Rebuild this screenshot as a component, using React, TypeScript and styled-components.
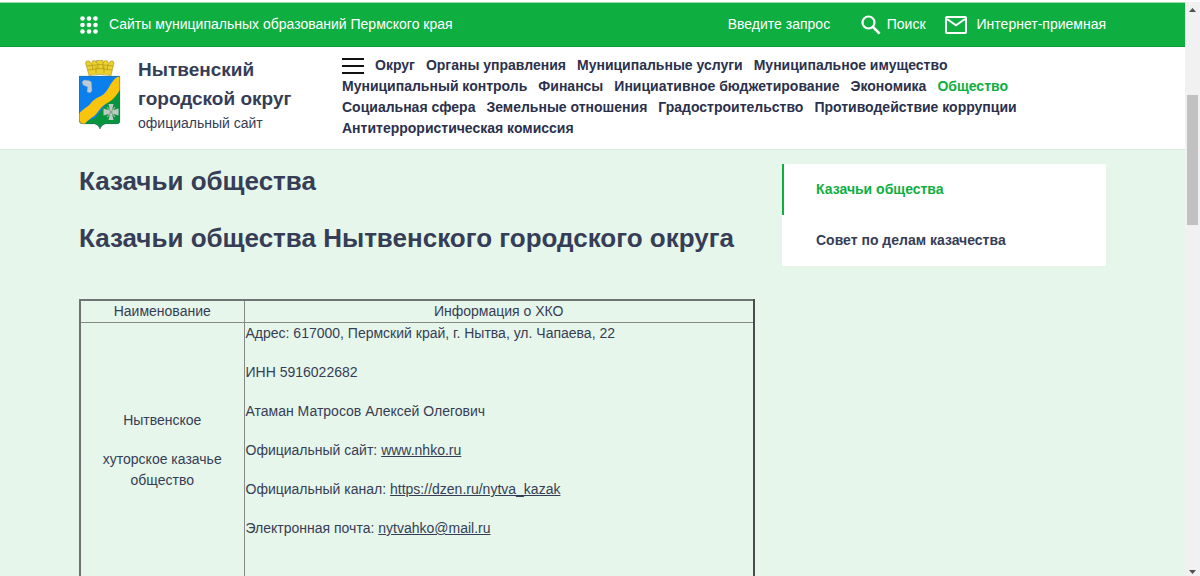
import React from "react";
import styled, { createGlobalStyle } from "styled-components";

const ink = "#363d56";
const green = "#0fae41";
const mint = "#e6f6ea";

const GlobalStyle = createGlobalStyle`
  *, *::before, *::after { box-sizing: border-box; }
  body {
    margin: 0;
    background: ${mint};
    color: ${ink};
    font-family: "Liberation Sans", Arial, sans-serif;
    font-size: 14px;
    line-height: 21px;
  }
  a { color: inherit; }
`;

const Viewport = styled.div`
  display: flex;
  height: 100vh;
  overflow: hidden;
  border-top: 2px solid #fff;
`;

const Page = styled.div`
  flex: 1;
  min-width: 0;
  overflow: hidden;
`;

const TopBar = styled.div`
  display: flex;
  align-items: center;
  justify-content: space-between;
  height: 45px;
  padding: 0 79px;
  background: ${green};
  border-top: 1px solid #9ad9ae;
  border-bottom: 1px solid #0a9c38;
  color: #fff;
`;

const TopLink = styled.a`
  display: flex;
  align-items: center;
  gap: 10px;
  color: #fff;
  text-decoration: none;
  white-space: nowrap;
`;

const TopTools = styled.div`
  display: flex;
  align-items: center;
  gap: 19px;
`;

const SearchForm = styled.form`
  display: flex;
  align-items: center;
`;

const SearchInput = styled.input`
  width: 133px;
  padding: 0;
  border: 0;
  outline: 0;
  background: transparent;
  color: #fff;
  font: inherit;
  &::placeholder { color: #fff; opacity: 1; }
`;

const SearchButton = styled.button`
  display: flex;
  align-items: center;
  gap: 6px;
  padding: 0;
  border: 0;
  background: transparent;
  color: #fff;
  font: inherit;
  cursor: pointer;
`;

const Header = styled.header`
  display: flex;
  align-items: flex-start;
  padding: 8px 79px 10px;
  background: #fff;
  border-bottom: 1px solid #d5ebdc;
`;

const Brand = styled.a`
  display: flex;
  flex: 0 0 263px;
  gap: 17px;
  color: ${ink};
  text-decoration: none;
`;

const EmblemSvg = styled.svg`
  display: block;
  flex: none;
  margin-top: 5px;
`;

const BrandName = styled.strong`
  display: block;
  font-size: 19px;
  line-height: 29px;
`;

const BrandNote = styled.span`
  display: block;
`;

const Nav = styled.nav`
  display: flex;
  flex: 1;
  flex-wrap: wrap;
  align-items: center;
  column-gap: 11px;
`;

const MenuButton = styled.button`
  display: flex;
  padding: 0;
  border: 0;
  background: transparent;
  cursor: pointer;
`;

const NavLink = styled.a<{ $active?: boolean }>`
  color: ${(p) => (p.$active ? green : "#2b314b")};
  font-weight: bold;
  text-decoration: none;
  white-space: nowrap;
`;

const Content = styled.div`
  display: grid;
  grid-template-columns: 676fr 324fr;
  column-gap: 27px;
  align-items: start;
  padding: 14px 79px;
`;

const Heading = styled.h1`
  margin: 0 0 22px;
  font-size: 26px;
  line-height: 35px;
`;

const Table = styled.table`
  width: 100%;
  margin-top: 43px;
  border-collapse: collapse;
  border: 2px solid #6f7371;
  border-right-color: #4a4d4c;
`;

const Cell = styled.td<{ $center?: boolean }>`
  padding: 0;
  border: 1px solid #858987;
  text-align: ${(p) => (p.$center ? "center" : "left")};
`;

const HeadCell = styled.th<{ $narrow?: boolean }>`
  width: ${(p) => (p.$narrow ? "164px" : "auto")};
  padding: 0;
  border: 1px solid #858987;
  font-weight: normal;
`;

const Paragraph = styled.p`
  margin: 0 0 18px;
  padding: 0 1px;
  &:last-child { margin-bottom: 0; }
`;

const SideMenu = styled.nav`
  background: #fff;
`;

const SideLink = styled.a<{ $active?: boolean }>`
  display: block;
  padding: 15px 32px;
  border-left: 2px solid ${(p) => (p.$active ? green : "#fff")};
  color: ${(p) => (p.$active ? green : ink)};
  font-weight: bold;
  text-decoration: none;
`;

const ScrollTrack = styled.div`
  display: flex;
  flex: 0 0 15px;
  flex-direction: column;
  align-items: center;
  justify-content: space-between;
  padding: 6px 0 2px;
  background: #f1f1f1;
`;

const ScrollSpace = styled.div`
  flex: 1;
  width: 11px;
  padding-top: 83px;
`;

const ScrollThumb = styled.div`
  height: 130px;
  background: #c1c1c1;
`;

const DotsIcon = () => (
  <svg width="20" height="20" viewBox="0 0 20 20" fill="#fff" aria-hidden="true">
    {[3.5, 10, 16.5].map((y) =>
      [3.5, 10, 16.5].map((x) => <circle key={`${x}-${y}`} cx={x} cy={y} r="2.3" />)
    )}
  </svg>
);

const SearchIcon = () => (
  <svg width="20" height="20" viewBox="0 0 20 20" fill="none" stroke="#fff" aria-hidden="true">
    <circle cx="7.5" cy="7.5" r="6" strokeWidth="2.2" />
    <path d="M12 12L18.6 18.6" strokeWidth="2.6" />
  </svg>
);

const MailIcon = () => (
  <svg width="22" height="18" viewBox="0 0 22 18" fill="none" stroke="#fff" strokeWidth="2" aria-hidden="true">
    <rect x="1" y="1" width="20" height="16" rx="1" />
    <path d="M2 3L11 9.3L20 3" />
  </svg>
);

const MenuIcon = () => (
  <svg width="22" height="16" viewBox="0 0 22 16" fill="#111" aria-hidden="true">
    <rect width="22" height="2" />
    <rect y="7" width="22" height="2" />
    <rect y="14" width="22" height="2" />
  </svg>
);

const Emblem = () => (
  <EmblemSvg width="42" height="70" viewBox="0 0 42 70" aria-hidden="true">
    <defs>
      <clipPath id="shield">
        <path d="M0 16H41V60Q41 64 38 64H26Q22 65 21 69Q20 65 16 64H4Q0 64 0 60Z" />
      </clipPath>
    </defs>
    <path
      d="M10 15.500L6.500 3L7.500 1H10.500L11.500 3H13L13.500 0.800H16.500L17.500 3V0.500H24V3L25.500 0.800H28.500L29 3H30.500L31.500 1H34L35 3L32 15.500Q21 13 10 15.500Z"
      fill="#ecd02c"
      stroke="#94801a"
      strokeWidth="0.5"
    />
    <path d="M8 6Q21 3 34 6M9 10Q21 7 33 10M13 4L14 10M19 3V9M24 3V9M29 4L28 10M17 6V13M25 6V13" fill="none" stroke="#a48c1d" strokeWidth="0.6" />
    <g clipPath="url(#shield)">
      <rect y="15" width="42" height="55" fill="#0a80ee" />
      <path d="M42 25V70H0V64L16 58Z" fill="#06943f" />
      <path d="M42 16V29C38 33 37 38 30 42C24 45 22 48 18 53C14 58 9 59 6 64H0V54C3 49 8 48 12 43C17 37 20 38 25 34C29 30 30 26 34 21Q36 17 42 16Z" fill="#fbc40c" />
      <path d="M3 22L5 20L10 20.500L12.500 22L13 31L11 33L8 32L8.500 27L4 25Z" fill="#bfcbd4" stroke="#7890a3" strokeWidth="0.4" />
      <path d="M29.500 44H34.500L33 50.500L39.500 48.500V55.500L33 53.500L34.500 60H29.500L31 53.500L24.500 55.500V48.500L31 50.500Z" fill="#bccbc0" />
      <path d="M28 47L36 57M36 47L28 57" stroke="#a6b8ac" strokeWidth="1.200" />
      <circle cx="32" cy="52" r="1.500" fill="#8ba293" />
    </g>
    <path d="M0.300 16.300H40.700V60Q40.700 63.700 38 63.700H26Q22 65 21 69Q20 65 16 63.700H4Q0.300 63.700 0.300 60Z" fill="none" stroke="#3b6a5a" strokeWidth="0.5" />
  </EmblemSvg>
);

const Arrow = ({ down }: { down?: boolean }) => (
  <svg width="7" height="4" viewBox="0 0 7 4" fill="#505050" aria-hidden="true">
    <path d={down ? "M0 0H7L3.5 4Z" : "M0 4H7L3.5 0Z"} />
  </svg>
);

const sections = [
  "Округ",
  "Органы управления",
  "Муниципальные услуги",
  "Муниципальное имущество",
  "Муниципальный контроль",
  "Финансы",
  "Инициативное бюджетирование",
  "Экономика",
  "Общество",
  "Социальная сфера",
  "Земельные отношения",
  "Градостроительство",
  "Противодействие коррупции",
  "Антитеррористическая комиссия",
];

export default function App() {
  return (
    <>
      <GlobalStyle />
      <Viewport>
        <Page>
          <TopBar>
            <TopLink href="#sites">
              <DotsIcon />
              Сайты муниципальных образований Пермского края
            </TopLink>
            <TopTools>
              <SearchForm onSubmit={(e) => e.preventDefault()}>
                <SearchInput type="text" placeholder="Введите запрос" aria-label="Введите запрос" />
                <SearchButton type="submit">
                  <SearchIcon />
                  Поиск
                </SearchButton>
              </SearchForm>
              <TopLink href="#reception">
                <MailIcon />
                Интернет-приемная
              </TopLink>
            </TopTools>
          </TopBar>

          <Header>
            <Brand href="#home">
              <Emblem />
              <span>
                <BrandName>
                  Нытвенский
                  <br />
                  городской округ
                </BrandName>
                <BrandNote>официальный сайт</BrandNote>
              </span>
            </Brand>
            <Nav>
              <MenuButton type="button" aria-label="Меню">
                <MenuIcon />
              </MenuButton>
              {sections.map((name) => (
                <NavLink key={name} href="#section" $active={name === "Общество"}>
                  {name}
                </NavLink>
              ))}
            </Nav>
          </Header>

          <Content>
            <main>
              <Heading>Казачьи общества</Heading>
              <Heading as="h2">Казачьи общества Нытвенского городского округа</Heading>
              <Table>
                <thead>
                  <tr>
                    <HeadCell $narrow>Наименование</HeadCell>
                    <HeadCell>Информация о ХКО</HeadCell>
                  </tr>
                </thead>
                <tbody>
                  <tr>
                    <Cell $center>
                      <Paragraph>Нытвенское</Paragraph>
                      <Paragraph>
                        хуторское казачье
                        <br />
                        общество
                      </Paragraph>
                      <Paragraph>&nbsp;</Paragraph>
                    </Cell>
                    <Cell>
                      <Paragraph>Адрес: 617000, Пермский край, г. Нытва, ул. Чапаева, 22</Paragraph>
                      <Paragraph>ИНН 5916022682</Paragraph>
                      <Paragraph>Атаман Матросов Алексей Олегович</Paragraph>
                      <Paragraph>
                        Официальный сайт: <a href="#site">www.nhko.ru</a>
                      </Paragraph>
                      <Paragraph>
                        Официальный канал: <a href="#channel">https://dzen.ru/nytva_kazak</a>
                      </Paragraph>
                      <Paragraph>
                        Электронная почта: <a href="#mail">nytvahko@mail.ru</a>
                      </Paragraph>
                      <Paragraph>&nbsp;</Paragraph>
                      <Paragraph>&nbsp;</Paragraph>
                    </Cell>
                  </tr>
                </tbody>
              </Table>
            </main>
            <SideMenu>
              <SideLink href="#societies" $active>
                Казачьи общества
              </SideLink>
              <SideLink href="#council">Совет по делам казачества</SideLink>
            </SideMenu>
          </Content>
        </Page>
        <ScrollTrack aria-hidden="true">
          <Arrow />
          <ScrollSpace>
            <ScrollThumb />
          </ScrollSpace>
          <Arrow down />
        </ScrollTrack>
      </Viewport>
    </>
  );
}
